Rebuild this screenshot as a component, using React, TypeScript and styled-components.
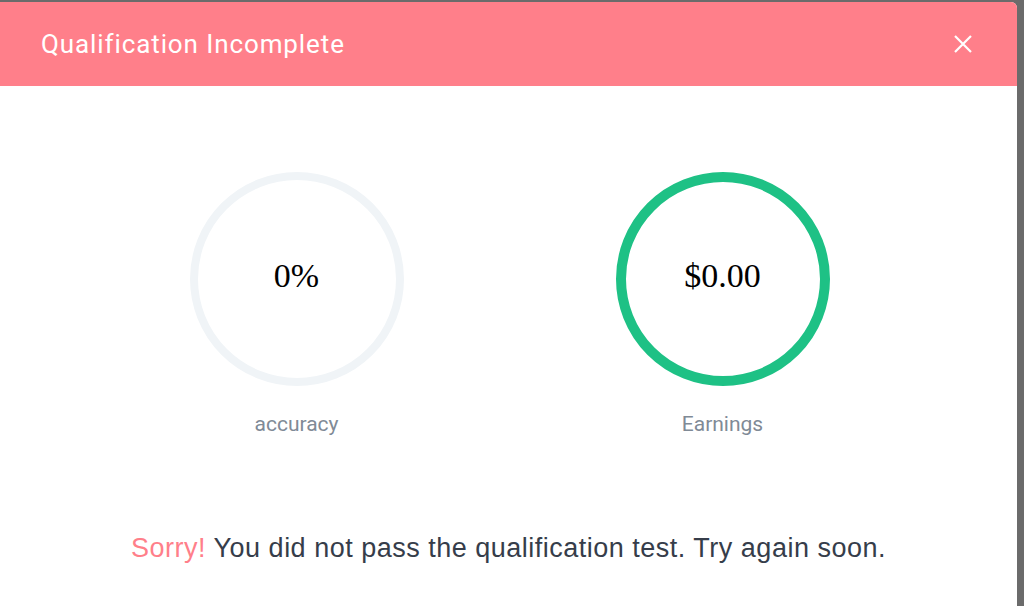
import React from "react";
import styled, { createGlobalStyle } from "styled-components";

const GlobalStyle = createGlobalStyle`
  html, body {
    margin: 0;
    padding: 0;
    height: 100%;
    background: #6b6b6b;
  }

  #root {
    height: 100%;
  }

  *,
  *:before,
  *:after {
    box-sizing: border-box;
  }
`;

const Backdrop = styled.div`
  height: 100%;
  padding: 2px 7px 0 0;
`;

const Modal = styled.div`
  height: 100%;
  background: #ffffff;
  border-top-right-radius: 6px;
  overflow: hidden;
  display: flex;
  flex-direction: column;
`;

const Header = styled.div`
  height: 84px;
  background: #ff7f8a;
  display: flex;
  align-items: center;
  justify-content: space-between;
  padding: 0 44px 0 41px;
`;

const Title = styled.h2`
  margin: 0;
  color: #ffffff;
  font-family: Roboto, "Liberation Sans", sans-serif;
  font-weight: 400;
  font-size: 26px;
  letter-spacing: 0.9px;
`;

const Close = styled.button`
  border: none;
  background: none;
  padding: 0;
  width: 20px;
  height: 20px;
  display: flex;
  align-items: center;
  justify-content: center;
  cursor: pointer;
`;

const Stats = styled.div`
  display: flex;
  justify-content: center;
  gap: 212px;
  padding: 86px 0 0 2px;
`;

const Stat = styled.div`
  display: flex;
  flex-direction: column;
  align-items: center;
  gap: 26px;
`;

const Ring = styled.div<{ $color: string; $stroke: number }>`
  width: 214px;
  height: 214px;
  border-radius: 50%;
  border: ${(p) => p.$stroke}px solid ${(p) => p.$color};
  display: flex;
  align-items: center;
  justify-content: center;
  padding-bottom: 7px;
  font-family: "Liberation Serif", "DejaVu Serif", serif;
  font-size: 34px;
  color: #000000;
`;

const Label = styled.div`
  font-family: Roboto, "Liberation Sans", sans-serif;
  font-size: 21px;
  color: #808a96;
`;

const Message = styled.p`
  margin: 97px 0 0;
  text-align: center;
  font-family: "Liberation Sans", Arial, sans-serif;
  font-size: 27px;
  letter-spacing: 0.5px;
  color: #363d4a;
`;

const Sorry = styled.span`
  color: #ff7f8a;
`;

export default function App() {
  return (
    <>
      <GlobalStyle />
      <Backdrop>
        <Modal>
          <Header>
            <Title>Qualification Incomplete</Title>
            <Close aria-label="close">
              <svg width="18" height="18" viewBox="0 0 18 18">
                <path
                  d="M1 1 L17 17 M17 1 L1 17"
                  stroke="#ffffff"
                  strokeWidth="2.2"
                  fill="none"
                />
              </svg>
            </Close>
          </Header>
          <Stats>
            <Stat>
              <Ring $color="#f0f4f7" $stroke={8}>
                0%
              </Ring>
              <Label>accuracy</Label>
            </Stat>
            <Stat>
              <Ring $color="#1ec185" $stroke={10}>
                $0.00
              </Ring>
              <Label>Earnings</Label>
            </Stat>
          </Stats>
          <Message>
            <Sorry>Sorry!</Sorry> You did not pass the qualification test. Try
            again soon.
          </Message>
        </Modal>
      </Backdrop>
    </>
  );
}
